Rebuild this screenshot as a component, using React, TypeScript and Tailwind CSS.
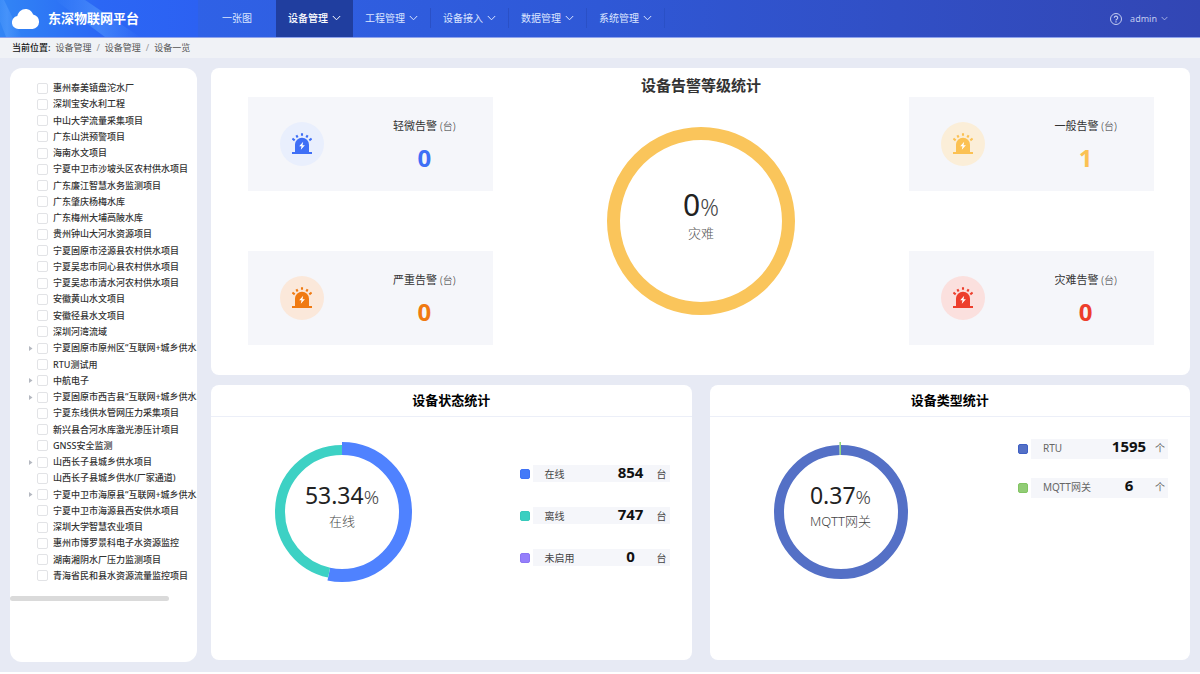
import { useState } from "react";

interface Project {
  name: string;
  expandable?: boolean;
}

interface Slice {
  label: string;
  value: number;
  color: string;
  active?: boolean;
}

const NAV_MENUS = ["设备管理", "工程管理", "设备接入", "数据管理", "系统管理"];

const PROJECTS: Project[] = [
  { name: "惠州泰美镇盘沱水厂" },
  { name: "深圳宝安水利工程" },
  { name: "中山大学流量采集项目" },
  { name: "广东山洪预警项目" },
  { name: "海南水文项目" },
  { name: "宁夏中卫市沙坡头区农村供水项目" },
  { name: "广东廉江智慧水务监测项目" },
  { name: "广东肇庆杨梅水库" },
  { name: "广东梅州大埔高陂水库" },
  { name: "贵州钟山大河水资源项目" },
  { name: "宁夏固原市泾源县农村供水项目" },
  { name: "宁夏吴忠市同心县农村供水项目" },
  { name: "宁夏吴忠市清水河农村供水项目" },
  { name: "安徽黄山水文项目" },
  { name: "安徽径县水文项目" },
  { name: "深圳河湾流域" },
  { name: "宁夏固原市原州区“互联网+城乡供水", expandable: true },
  { name: "RTU测试用" },
  { name: "中航电子", expandable: true },
  { name: "宁夏固原市西吉县“互联网+城乡供水", expandable: true },
  { name: "宁夏东线供水管网压力采集项目" },
  { name: "新兴县合河水库激光渗压计项目" },
  { name: "GNSS安全监测" },
  { name: "山西长子县城乡供水项目", expandable: true },
  { name: "山西长子县城乡供水(厂家通道)" },
  { name: "宁夏中卫市海原县“互联网+城乡供水", expandable: true },
  { name: "宁夏中卫市海源县西安供水项目" },
  { name: "深圳大学智慧农业项目" },
  { name: "惠州市博罗景科电子水资源监控" },
  { name: "湖南湘阴水厂压力监测项目" },
  { name: "青海省民和县水资源流量监控项目" },
];

function Chevron({ className }: { className?: string }) {
  return (
    <svg viewBox="0 0 9 6" className={className} fill="none" stroke="currentColor" aria-hidden>
      <path d="M0.8 1 4.5 4.8 8.2 1" strokeWidth="1" />
    </svg>
  );
}

function NavMenu({ label, active }: { label: string; active: boolean }) {
  return (
    <button
      type="button"
      className={`flex items-center border-b border-transparent ${
        active ? "bg-[#203e9f] font-medium text-white" : "text-[#dbe5ff]"
      }`}
    >
      <span className="flex items-center gap-1 px-3">
        {label}
        <Chevron className="h-[6px] w-[9px]" />
      </span>
      {!active && <span className="h-5 w-px bg-[#2a50c6]" />}
    </button>
  );
}

function Header() {
  return (
    <header className="flex h-[38px] shrink-0 items-stretch border-b border-[#8fa3ec] bg-linear-to-r from-[#2f66ee] via-[#2f58d6] to-[#3246b4] text-[10px]">
      <div className="relative flex w-[198px] items-center gap-2 overflow-hidden bg-linear-to-r from-[#3285f5] via-[#2b67f5] to-[#2c61f2] pl-3">
        <svg className="absolute inset-0 h-full w-full" viewBox="0 0 198 37" preserveAspectRatio="none" aria-hidden>
          <defs>
            <linearGradient id="beam" x1="0" x2="1" y1="0" y2="0">
              <stop offset="0" stopColor="#5aa2ff" stopOpacity="0" />
              <stop offset="0.5" stopColor="#5aa2ff" stopOpacity="0.5" />
              <stop offset="1" stopColor="#5aa2ff" stopOpacity="0" />
            </linearGradient>
          </defs>
          <path d="M-8 0H4L22 37H6Z" fill="url(#beam)" />
          <path d="M55 0H85L140 37H105Z" fill="url(#beam)" />
        </svg>
        <svg className="relative h-5 w-7" viewBox="0 0 28 20" fill="#fff" aria-hidden>
          <path d="M6.500 20A6.500 6.500 0 0 1 5.300 7.100C6.300 3 9.500 0 13.500 0c3.600 0 6.400 2.200 7.600 5.400A7.400 7.400 0 0 1 20.600 20Z" />
        </svg>
        <h1 className="relative text-[13px] font-bold text-white">东深物联网平台</h1>
      </div>
      <nav className="flex items-stretch">
        <a href="#map" className="flex w-[78px] items-center justify-center text-[#dbe5ff]">
          一张图
        </a>
        {NAV_MENUS.map((label, i) => (
          <NavMenu key={label} label={label} active={i === 0} />
        ))}
      </nav>
      <div className="ml-auto flex items-center gap-2 pr-8 text-[9px] text-[#c3ccf0]">
        <button type="button" aria-label="帮助">
          <svg className="h-3 w-3" viewBox="0 0 12 12" fill="none" stroke="currentColor" aria-hidden>
            <circle cx="6" cy="6" r="5.500" />
            <path d="M4.300 4.800a1.700 1.700 0 1 1 2.500 1.500c-.6.300-.8.500-.8 1.100" strokeWidth="1.200" />
            <path d="M6 8.300v1.200" strokeWidth="1.200" />
          </svg>
        </button>
        <button type="button" className="flex items-center gap-1">
          admin
          <Chevron className="h-[5px] w-[7px]" />
        </button>
      </div>
    </header>
  );
}

function Breadcrumb() {
  const crumbs = ["设备管理", "设备管理", "设备一览"];
  return (
    <nav className="flex h-5 shrink-0 items-center bg-[#f0f2f6] pl-3 text-[9px] text-[#555]">
      <span className="mr-[5px] font-medium text-[#111]">当前位置:</span>
      {crumbs.map((crumb, i) => (
        <span key={i} className="flex">
          {i > 0 && <span className="px-[5px] text-[#999]">/</span>}
          <a href="#crumb">{crumb}</a>
        </span>
      ))}
    </nav>
  );
}

function ProjectTree() {
  const [checked, setChecked] = useState<Record<string, boolean>>({});

  return (
    <aside className="flex w-[187px] shrink-0 flex-col overflow-hidden rounded-xl bg-white pt-3 pb-[61px]">
      <ul className="grid flex-1 auto-rows-fr pl-[18px] text-[9px] leading-4 font-medium text-[#333]">
        {PROJECTS.map(({ name, expandable }) => (
          <li key={name} className="flex items-center gap-1 whitespace-nowrap">
            {expandable ? (
              <button type="button" aria-label="展开" className="w-[5px] text-[#b4b8c0]">
                <svg className="h-[5px] w-[5px]" viewBox="0 0 5 5" fill="currentColor" aria-hidden>
                  <path d="M1 0 4.500 2.500 1 5Z" />
                </svg>
              </button>
            ) : (
              <span className="w-[5px]" />
            )}
            <label className="flex items-center gap-[5px]">
              <input
                type="checkbox"
                checked={!!checked[name]}
                onChange={(e) => setChecked({ ...checked, [name]: e.target.checked })}
                className="h-[11px] w-[11px] shrink-0 appearance-none rounded-xs border border-[#e2e3e6] bg-white checked:bg-[#3f72f8]"
              />
              {name}
            </label>
          </li>
        ))}
      </ul>
      <div className="mt-3 h-[5px] w-[85%] rounded-full bg-[#dadada]" />
    </aside>
  );
}

function SirenIcon() {
  return (
    <svg className="h-[22px] w-5" viewBox="0 0 20 22" aria-hidden>
      <path d="M3 19V11.500a7 6.800 0 0 1 14 0V19Z" fill="currentColor" />
      <path d="M0 19h20v2H0Z" fill="currentColor" />
      <path
        d="M.4 5.600 2.700 7.400M4.400 2.200 5.600 4.500M10 .2V2.800M15.600 2.200 14.400 4.500M19.600 5.600 17.300 7.400"
        stroke="currentColor"
        strokeWidth="2.100"
      />
      <path d="M11.200 8.800 7.200 13.300H9.500L8.800 16.800 12.900 12.200H10.500Z" fill="#fff" />
    </svg>
  );
}

function AlarmCard({ label, count, tone, badge }: { label: string; count: number; tone: string; badge: string }) {
  return (
    <div className="flex h-[94px] items-center bg-[#f5f6fa] pl-8">
      <span className={`flex h-11 w-11 shrink-0 items-center justify-center rounded-full ${tone} ${badge}`}>
        <SirenIcon />
      </span>
      <div className="flex flex-1 flex-col items-center gap-[6px] pt-[2px] pl-8">
        <p className="text-[11px] leading-5 text-[#333]">
          {label} <span className="text-[10px] font-light">(台)</span>
        </p>
        <p className={`text-2xl leading-8 font-bold ${tone}`}>{count}</p>
      </div>
    </div>
  );
}

function AlarmPanel() {
  return (
    <section className="rounded-lg bg-white pt-[7px] pr-9 pb-[30px] pl-[37px]">
      <h2 className="mb-[2px] text-center text-[15px] leading-5 font-bold text-[#333]">设备告警等级统计</h2>
      <div className="flex items-center justify-between">
        <div className="flex w-[27%] flex-col gap-15">
          <AlarmCard label="轻微告警" count={0} tone="text-[#3f6ff6]" badge="bg-[#e9effd]" />
          <AlarmCard label="严重告警" count={0} tone="text-[#f07a12]" badge="bg-[#fbe8da]" />
        </div>
        <div className="relative">
          <svg className="h-[188px] w-[188px]" viewBox="0 0 188 188" aria-hidden>
            <circle cx="94" cy="94" r="87.500" fill="none" stroke="#fac55b" strokeWidth="13" />
          </svg>
          <div className="absolute inset-0 flex flex-col items-center justify-center pb-[10px]">
            <p className="text-[30px] leading-8 text-[#222]">
              0<span className="text-[23px] font-light text-[#444]">%</span>
            </p>
            <p className="text-[13px] leading-5 font-light text-[#555]">灾难</p>
          </div>
        </div>
        <div className="flex w-[27%] flex-col gap-15">
          <AlarmCard label="一般告警" count={1} tone="text-[#fbc153]" badge="bg-[#fbeed8]" />
          <AlarmCard label="灾难告警" count={0} tone="text-[#ed3e2c]" badge="bg-[#fbe0de]" />
        </div>
      </div>
    </section>
  );
}

function Donut({ slices, percent, label }: { slices: Slice[]; percent: string; label: string }) {
  const total = slices.reduce((sum, s) => sum + s.value, 0);
  let offset = 0;

  return (
    <div className="relative">
      <svg className="h-[140px] w-[140px]" viewBox="0 0 140 140" fill="none" aria-hidden>
        <g transform="rotate(-90 70 70)">
          {slices.map((s) => {
            const share = (s.value / total) * 100;
            const start = offset;
            offset += share;
            if (share === 0) return null;
            return (
              <circle
                key={s.label}
                cx="70"
                cy="70"
                r={s.active ? 63.5 : 62}
                stroke={s.color}
                strokeWidth={s.active ? 13 : 10}
                pathLength={100}
                strokeDasharray={`${share} ${100 - share}`}
                strokeDashoffset={-start}
              />
            );
          })}
        </g>
      </svg>
      <div className="absolute inset-0 flex flex-col items-center justify-center pb-3">
        <p className="text-[23px] leading-7 text-[#222]">
          {percent}
          <span className="text-[19px] font-light text-[#444]">%</span>
        </p>
        <p className="text-[13px] leading-5 font-light text-[#444]">{label}</p>
      </div>
    </div>
  );
}

function LegendRow({ slice, unit, swatch, bar }: { slice: Slice; unit: string; swatch: string; bar: string }) {
  return (
    <li className="flex items-center gap-[3px]">
      <span className={`h-[10px] w-[10px] rounded-xs border ${swatch}`} />
      <span className={`flex items-baseline bg-[#f5f6fa] pl-3 text-[10px] leading-[15px] ${bar}`}>
        <span className="w-[68px]">{slice.label}</span>
        <span className="w-9 text-center text-[15px] font-bold text-[#111]">{slice.value}</span>
        <span className="w-[21px] pl-2">{unit}</span>
      </span>
    </li>
  );
}

function StatPanel({ title, children }: { title: string; children: React.ReactNode }) {
  return (
    <section className="flex flex-1 flex-col rounded-lg bg-white">
      <h2 className="border-b border-[#eceff8] text-center text-[13px] leading-[31px] font-bold text-black">
        {title}
      </h2>
      <div className="flex items-start justify-between pr-[22px] pl-[61px]">{children}</div>
    </section>
  );
}

const STATUS: Slice[] = [
  { label: "在线", value: 854, color: "#4f82ff", active: true },
  { label: "离线", value: 747, color: "#3dd1c4" },
  { label: "未启用", value: 0, color: "#9580ff" },
];

const STATUS_SWATCHES = [
  "border-[#3f72f5] bg-[#447af8]",
  "border-[#36c9bb] bg-[#3bcfc1]",
  "border-[#8b75f3] bg-[#957ffb]",
];

const TYPES: Slice[] = [
  { label: "RTU", value: 1595, color: "#5470c6" },
  { label: "MQTT网关", value: 6, color: "#91d67c", active: true },
];

const TYPE_SWATCHES = ["border-[#3f60c4] bg-[#5470c6]", "border-[#82c463] bg-[#91cc75]"];

export default function App() {
  return (
    <div className="flex min-h-screen flex-col bg-white font-['Noto_Sans','Noto_Sans_CJK_SC',sans-serif]" lang="zh-CN">
      <Header />
      <Breadcrumb />
      <div className="mb-[2px] flex flex-1 gap-[14px] bg-[#e7eaf4] p-[10px]">
        <ProjectTree />
        <main className="flex min-w-0 flex-1 flex-col gap-[10px] pb-[2px]">
          <AlarmPanel />
          <div className="flex flex-1 gap-[18px]">
            <StatPanel title="设备状态统计">
              <div className="pt-[25px]">
                <Donut slices={STATUS} percent="53.34" label="在线" />
              </div>
              <ul className="flex flex-col gap-[25px] pt-12">
                {STATUS.map((s, i) => (
                  <LegendRow key={s.label} slice={s} unit="台" swatch={STATUS_SWATCHES[i]} bar="h-[17px] text-[#444]" />
                ))}
              </ul>
            </StatPanel>
            <StatPanel title="设备类型统计">
              <div className="pt-[25px]">
                <Donut slices={TYPES} percent="0.37" label="MQTT网关" />
              </div>
              <ul className="flex flex-col gap-[19px] pt-[22px]">
                {TYPES.map((s, i) => (
                  <LegendRow key={s.label} slice={s} unit="个" swatch={TYPE_SWATCHES[i]} bar="h-5 text-[#666]" />
                ))}
              </ul>
            </StatPanel>
          </div>
        </main>
      </div>
    </div>
  );
}
